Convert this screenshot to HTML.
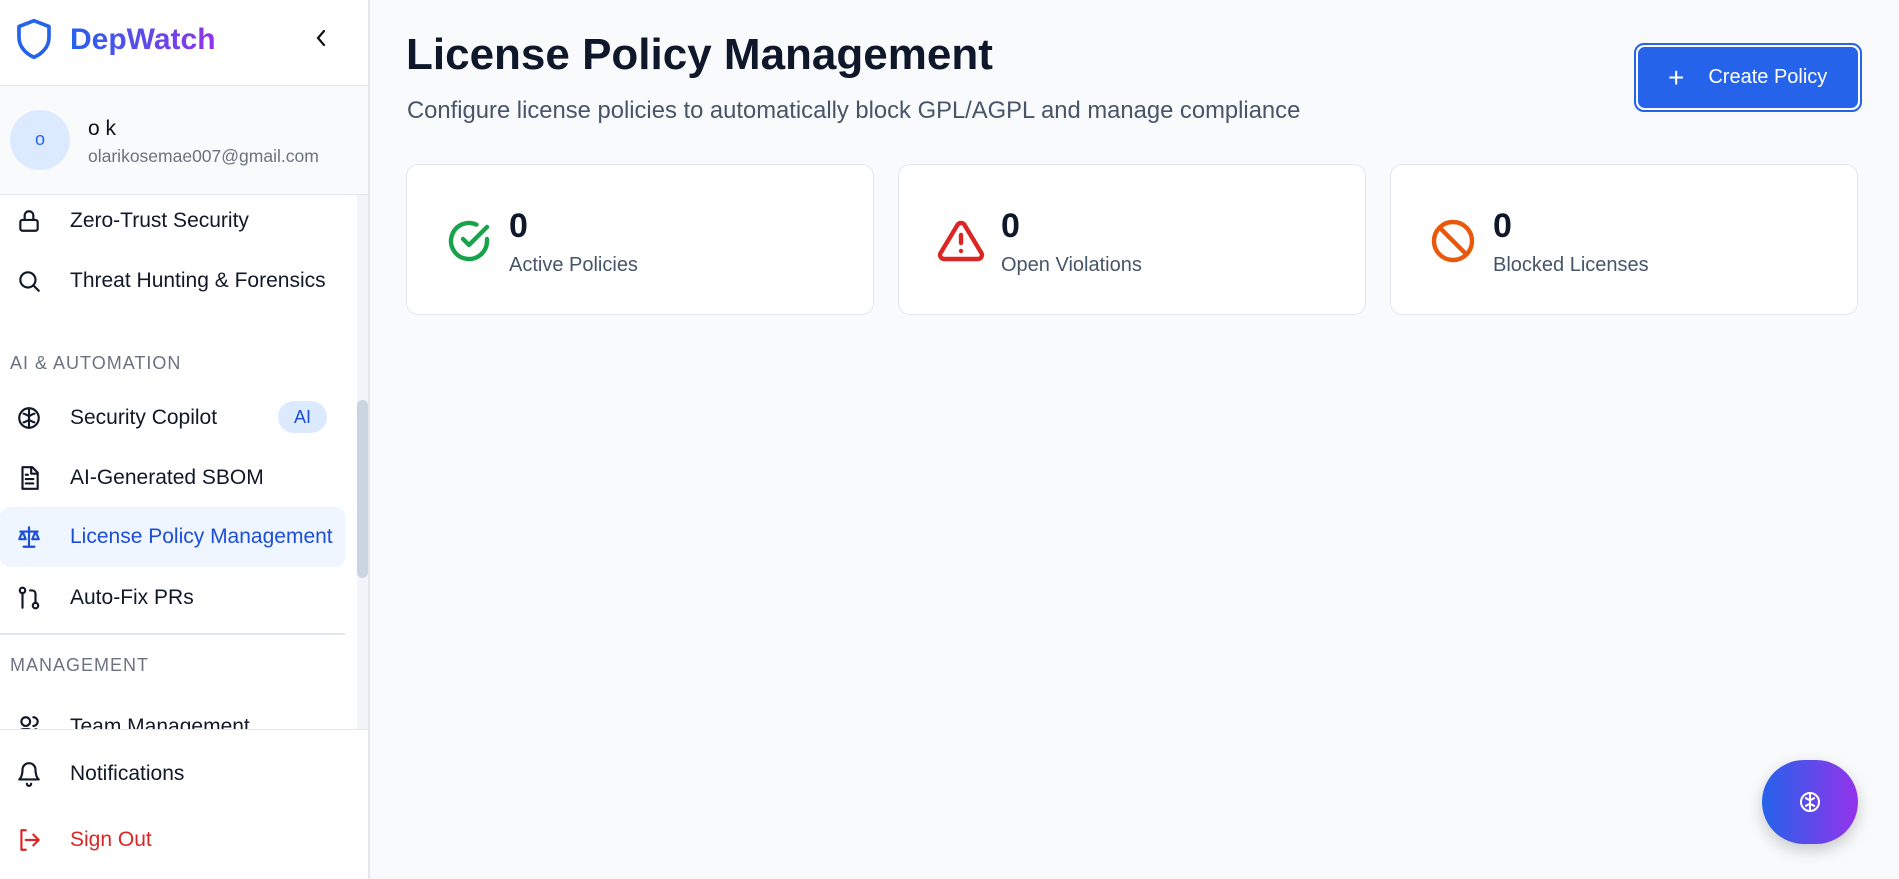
<!DOCTYPE html>
<html><head><meta charset="utf-8"><style>
*{box-sizing:border-box;margin:0;padding:0}
body{width:1899px;height:879px;overflow:hidden;font-family:"Liberation Sans","DejaVu Sans",sans-serif;background:#f8fafc;position:relative;color:#0f172a}
.sb{position:absolute;left:0;top:0;width:370px;height:879px;background:#fff;border-right:2px solid #e5e7eb}
.ab{position:absolute}
.item{position:absolute;left:0;width:345px;height:60px;display:flex;align-items:center;font-size:21px;color:#111827}
.item svg{position:absolute;left:16px;width:26px;height:26px;fill:none;stroke:currentColor;stroke-width:2;stroke-linecap:round;stroke-linejoin:round}
.item span{position:absolute;left:70px}
.sec{position:absolute;left:10px;font-size:18px;letter-spacing:1px;color:#6b7280}
.card{position:absolute;top:164px;width:468px;height:151px;background:#fff;border:1px solid #e2e8f0;border-radius:12px}
.card svg{position:absolute;left:38px;top:52px;width:48px;height:48px;fill:none;stroke-width:2.2;stroke-linecap:round;stroke-linejoin:round}
.card .n{position:absolute;left:102px;top:42px;font-size:34px;font-weight:bold;color:#0f172a}
.card .l{position:absolute;left:102px;top:89px;font-size:20px;color:#475569}
</style></head><body>
<div class="sb">
 <svg class="ab" style="left:14px;top:16px" width="40" height="46" viewBox="0 0 24 26" fill="none" stroke="#2563eb" stroke-width="2.2" stroke-linejoin="round"><path d="M12 2 L21 5.5 V12 C21 18 16.5 22 12 24 C7.5 22 3 18 3 12 V5.5 Z"/></svg>
 <div class="ab" style="left:70px;top:23px;font-size:30px;font-weight:bold;background:linear-gradient(90deg,#2563eb,#9333ea);-webkit-background-clip:text;color:transparent">DepWatch</div>
 <svg class="ab" style="left:314px;top:28px" width="14" height="20" viewBox="0 0 14 20" fill="none" stroke="#111" stroke-width="2.2" stroke-linecap="round"><path d="M10 3 L4 10 L10 17"/></svg>
 <div class="ab" style="left:0;top:85px;width:368px;height:110px;background:#f8fafc;border-top:1px solid #e2e8f0;border-bottom:1px solid #e2e8f0"></div>
 <div class="ab" style="left:10px;top:110px;width:60px;height:60px;border-radius:50%;background:#dbeafe;color:#2563eb;font-size:18px;text-align:center;line-height:58px">o</div>
 <div class="ab" style="left:88px;top:117px;font-size:21px;color:#111">o k</div>
 <div class="ab" style="left:88px;top:146px;font-size:17.5px;color:#6b7280">olarikosemae007@gmail.com</div>
 <div class="ab" style="left:357px;top:195px;width:11px;height:534px;background:#f1f5f9"></div>
 <div class="ab" style="left:357px;top:400px;width:11px;height:178px;background:#cbd5e1;border-radius:6px"></div>
 <div class="item" style="top:191px"><svg viewBox="0 0 24 24"><rect x="4" y="11" width="16" height="10" rx="2"/><path d="M8 11V7a4 4 0 0 1 8 0v4"/></svg><span>Zero-Trust Security</span></div>
 <div class="item" style="top:251px"><svg viewBox="0 0 24 24"><circle cx="11" cy="11" r="7"/><path d="M21 21l-5-5"/></svg><span>Threat Hunting &amp; Forensics</span></div>
 <div class="sec" style="top:353px">AI &amp; AUTOMATION</div>
 <div class="item" style="top:388px"><svg viewBox="0 0 24 24"><circle cx="12" cy="12" r="9"/><path d="M12 3v18M7 8c2 0 3 2 5 2M17 8c-2 0-3 2-5 2M7 16c2 0 3-2 5-2M17 16c-2 0-3-2-5-2"/></svg><span>Security Copilot</span>
  <div class="ab" style="left:278px;top:13px;width:49px;height:32px;border-radius:16px;background:#dbeafe;color:#1d4ed8;font-size:18px;text-align:center;line-height:32px">AI</div></div>
 <div class="item" style="top:448px"><svg viewBox="0 0 24 24"><path d="M6 2h9l5 5v15H6z"/><path d="M14 2v6h6M9 13h7M9 17h7M9 9h2"/></svg><span>AI-Generated SBOM</span></div>
 <div class="item" style="top:507px;background:#eff6ff;border-radius:10px;color:#1d4ed8"><svg viewBox="0 0 24 24"><path d="M12 3v18M7 21h10M4 7h16M6 7l-3 7h6zM18 7l-3 7h6z"/></svg><span>License Policy Management</span></div>
 <div class="item" style="top:568px"><svg viewBox="0 0 24 24"><circle cx="6" cy="5" r="2.5"/><circle cx="18" cy="19" r="2.5"/><path d="M6 8v13M13 5h2a3 3 0 0 1 3 3v8"/></svg><span>Auto-Fix PRs</span></div>
 <div class="ab" style="left:0;top:633px;width:345px;height:2px;background:#e2e8f0"></div>
 <div class="sec" style="top:655px">MANAGEMENT</div>
 <div class="ab" style="left:0;top:695px;width:357px;height:34px;overflow:hidden"><div class="item" style="top:2px;height:60px"><svg viewBox="0 0 24 24"><circle cx="9" cy="7" r="4"/><path d="M2 21v-2a5 5 0 0 1 5-5h4a5 5 0 0 1 5 5v2M16 3a4 4 0 0 1 0 8M22 21v-2a5 5 0 0 0-4-5"/></svg><span>Team Management</span></div></div>
 <div class="ab" style="left:0;top:729px;width:368px;height:1px;background:#e2e8f0"></div>
 <div class="item" style="top:744px"><svg viewBox="0 0 24 24"><path d="M6 8a6 6 0 0 1 12 0c0 7 3 9 3 9H3s3-2 3-9M10 21a2 2 0 0 0 4 0"/></svg><span>Notifications</span></div>
 <div class="item" style="top:810px;color:#dc2626"><svg viewBox="0 0 24 24"><path d="M9 21H5V3h4M16 17l5-5-5-5M21 12H9"/></svg><span>Sign Out</span></div>
</div>
<div class="ab" style="left:406px;top:30px;font-size:44px;font-weight:bold;color:#0f172a">License Policy Management</div>
<div class="ab" style="left:407px;top:97px;font-size:23.8px;color:#475569">Configure license policies to automatically block GPL/AGPL and manage compliance</div>
<div class="ab" style="left:1634px;top:43px;width:228px;height:69px;border-radius:10px;border:2px solid #2563eb;padding:2px"><div style="width:100%;height:100%;background:#2563eb;border-radius:7px;color:#fff;font-size:20px;display:flex;align-items:center;padding-left:30px"><span style="font-size:28px;font-weight:300;margin-right:24px">+</span>Create Policy</div></div>
<div class="card" style="left:406px"><svg viewBox="0 0 24 24" stroke="#16a34a"><path d="M21 11v1a9 9 0 1 1-5.3-8.2"/><path d="M9 11l3 3 9-9"/></svg><div class="n">0</div><div class="l">Active Policies</div></div>
<div class="card" style="left:898px"><svg viewBox="0 0 24 24" stroke="#dc2626"><path d="M10.3 3.9L1.8 18a2 2 0 0 0 1.7 3h17a2 2 0 0 0 1.7-3L13.7 3.9a2 2 0 0 0-3.4 0z"/><path d="M12 9v4M12 17h.01"/></svg><div class="n">0</div><div class="l">Open Violations</div></div>
<div class="card" style="left:1390px"><svg viewBox="0 0 24 24" stroke="#ea580c"><circle cx="12" cy="12" r="9.5"/><path d="M5.3 5.3l13.4 13.4"/></svg><div class="n">0</div><div class="l">Blocked Licenses</div></div>
<div class="ab" style="left:1762px;top:760px;width:96px;height:84px;border-radius:42px;background:linear-gradient(90deg,#2563eb,#9333ea);box-shadow:0 6px 16px rgba(0,0,0,.2)"><svg style="position:absolute;left:36px;top:30px" width="24" height="24" viewBox="0 0 24 24" fill="none" stroke="#fff" stroke-width="2"><circle cx="12" cy="12" r="9"/><path d="M12 3v18M7 8c2 0 3 2 5 2M17 8c-2 0-3 2-5 2M7 16c2 0 3-2 5-2M17 16c-2 0-3-2-5-2"/></svg></div>
</body></html>
